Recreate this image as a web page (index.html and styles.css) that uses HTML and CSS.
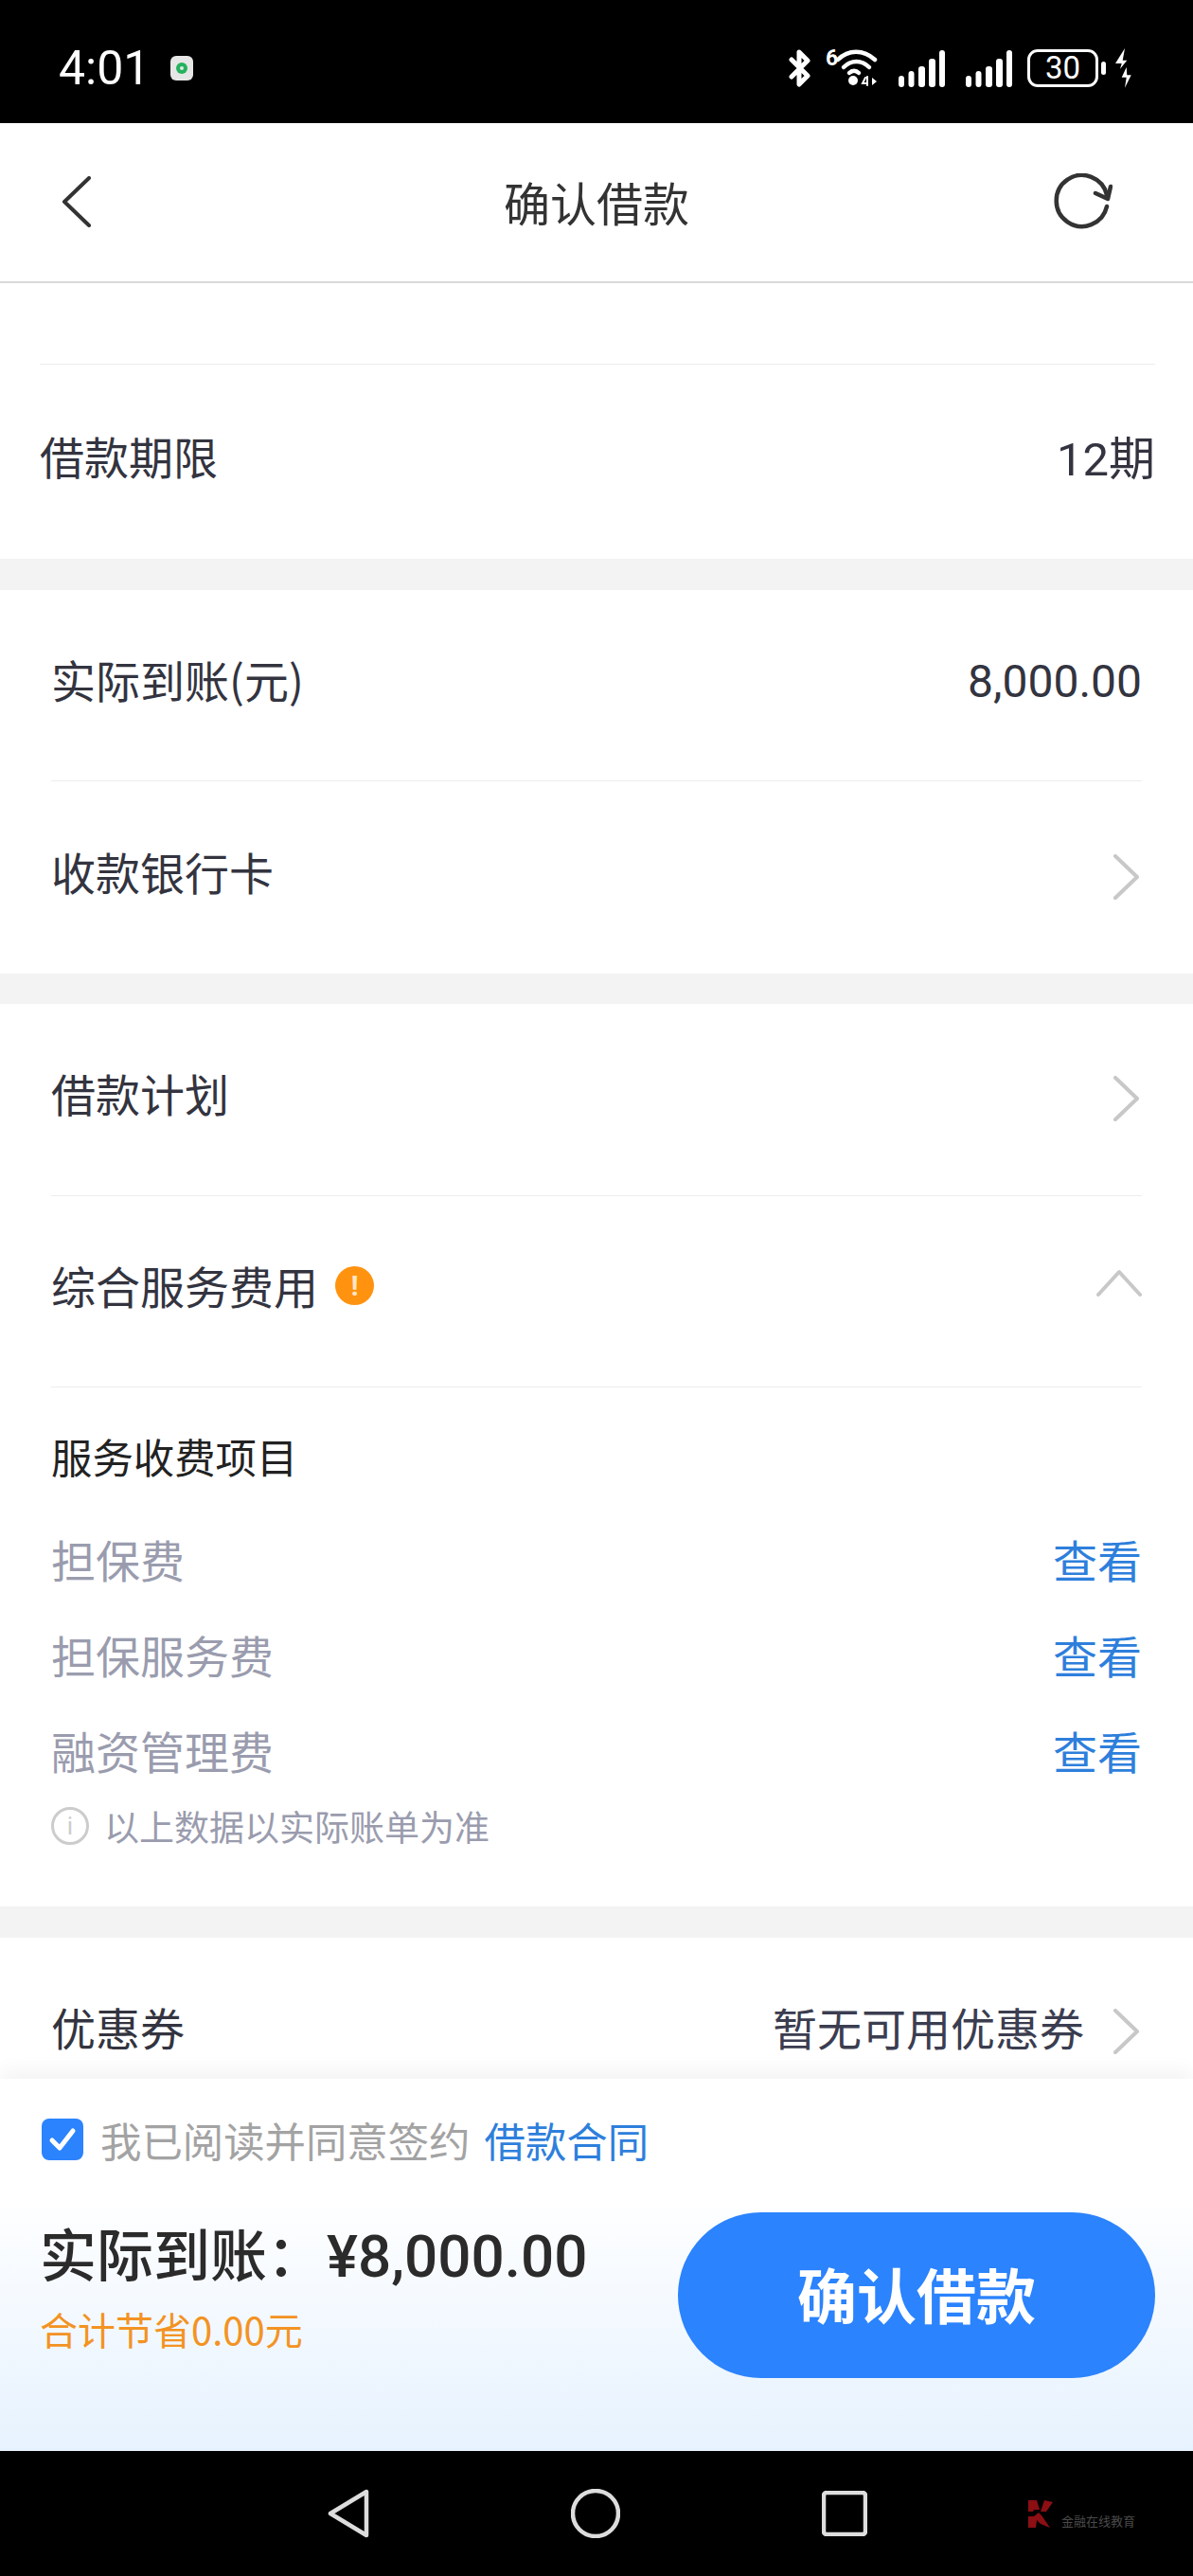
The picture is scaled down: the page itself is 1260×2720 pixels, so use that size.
FILE: index.html
```html
<!DOCTYPE html>
<html lang="zh-CN">
<head>
    <meta charset="UTF-8">
    <title>确认借款</title>
    <link rel="stylesheet" href="styles.css">
</head>
<body>
<div id="page">
    <div id="status">
        <span class="time">4:01</span>
        <span class="notice">
            <svg width="24" height="26" viewBox="0 0 24 26"><rect width="24" height="26" rx="6" fill="#e6e6e6"/><circle cx="12" cy="13" r="6" fill="#25b25f"/><circle cx="12" cy="13" r="2" fill="#e6e6e6"/></svg>
        </span>
        <div class="status-icons">
            <svg class="bt" width="24" height="40" viewBox="0 0 24 40" fill="none" stroke="#fff" stroke-width="5" stroke-linecap="round" stroke-linejoin="round"><path d="M3 11 L20 28 L11 37 V3 L20 12 L3 29"/></svg>
            <span class="wifi-six">6</span>
            <svg class="wifi" width="44" height="40" viewBox="0 0 44 40" fill="none" stroke="#fff" stroke-width="4.5" stroke-linecap="round"><path d="M2 11 C13 0 29 0 41 11"/><path d="M8 19 C16 11 27 11 35 19"/><circle cx="18" cy="33" r="5" fill="#fff" stroke="none"/><path d="M14 25 C17 22 21 22 24 25"/><path d="M31 30 L28 36 H33 M33 29 V38" stroke-width="2"/><path d="M38 30 V38 L43 34 Z" fill="#fff" stroke="none"/></svg>
            <svg class="signal" width="49" height="39" viewBox="0 0 49 39" fill="#fff"><rect x="0" y="27" width="6" height="12" rx="3"/><rect x="10.5" y="22" width="6" height="17" rx="3"/><rect x="21" y="17" width="7" height="22" rx="3"/><rect x="32" y="9" width="7" height="30" rx="3"/><rect x="43" y="0" width="6" height="39" rx="3"/></svg>
            <svg class="signal" width="49" height="39" viewBox="0 0 49 39" fill="#fff"><rect x="0" y="27" width="6" height="12" rx="3"/><rect x="10.5" y="22" width="6" height="17" rx="3"/><rect x="21" y="17" width="7" height="22" rx="3"/><rect x="32" y="9" width="7" height="30" rx="3"/><rect x="43" y="0" width="6" height="39" rx="3"/></svg>
            <span class="battery">30</span>
            <span class="battery-tip"></span>
            <svg class="bolt" width="18" height="42" viewBox="0 0 18 42" fill="#fff"><path d="M11 0 L1 16 H7.7 L6 21.7 L13.3 12.7 H8.7 Z"/><path d="M12.7 20 L7.7 30.7 H12.7 L11 41.7 L17.7 28.3 H13.3 Z"/></svg>
        </div>
    </div>

    <div id="nav">
        <svg width="31" height="54" viewBox="0 0 31 54" fill="none" stroke="#333" stroke-width="4" stroke-linecap="round" stroke-linejoin="round"><path d="M29 2 L3 27 L29 52"/></svg>
        <h1>确认借款</h1>
        <svg class="refresh" width="62" height="60" viewBox="0 0 62 60" fill="none" stroke="#333" stroke-width="4.5" stroke-linecap="round" stroke-linejoin="round"><path d="M56 35 A27 27 0 1 1 56 23"/><path d="M44 21 L57 27 L60 14"/></svg>
    </div>

    <div id="content">
        <div class="term">
            <div class="term-row">
                <span>借款期限</span>
                <span>12期</span>
            </div>
        </div>
        <div class="band"></div>

        <div class="group">
            <div class="row">
                <span>实际到账(元)</span>
                <span class="amount">8,000.00</span>
            </div>
            <div class="row last">
                <span>收款银行卡</span>
                <svg class="arrow" width="29" height="48" viewBox="0 0 29 48" fill="none" stroke="#c8c8c8" stroke-width="4" stroke-linecap="round" stroke-linejoin="round"><path d="M3 2 L26 24 L3 46"/></svg>
            </div>
        </div>
        <div class="band"></div>

        <div class="group">
            <div class="row">
                <span>借款计划</span>
                <svg class="arrow" width="29" height="48" viewBox="0 0 29 48" fill="none" stroke="#c8c8c8" stroke-width="4" stroke-linecap="round" stroke-linejoin="round"><path d="M3 2 L26 24 L3 46"/></svg>
            </div>
            <div class="row">
                <span class="with-tip">综合服务费用<i class="warn">!</i></span>
                <svg class="arrow-up" width="48" height="30" viewBox="0 0 48 30" fill="none" stroke="#c8c8c8" stroke-width="4" stroke-linecap="round" stroke-linejoin="round"><path d="M2 27 L24 3 L46 27"/></svg>
            </div>
            <div class="fees">
                <h2>服务收费项目</h2>
                <div class="fee"><span>担保费</span><a>查看</a></div>
                <div class="fee"><span>担保服务费</span><a>查看</a></div>
                <div class="fee"><span>融资管理费</span><a>查看</a></div>
                <p class="note"><i class="info">i</i>以上数据以实际账单为准</p>
            </div>
        </div>
        <div class="band"></div>

        <div class="group">
            <div class="row">
                <span>优惠券</span>
                <span class="coupon">暂无可用优惠券
                    <svg class="arrow" width="29" height="48" viewBox="0 0 29 48" fill="none" stroke="#c8c8c8" stroke-width="4" stroke-linecap="round" stroke-linejoin="round"><path d="M3 2 L26 24 L3 46"/></svg>
                </span>
            </div>
        </div>
    </div>

    <div id="footer">
        <div class="agree">
            <svg width="44" height="44" viewBox="0 0 44 44"><rect width="44" height="44" rx="8" fill="#2b83fd"/><path d="M11 23 L19 31 L33 13" fill="none" stroke="#fff" stroke-width="5" stroke-linecap="round" stroke-linejoin="round"/></svg>
            <span>我已阅读并同意签约</span>
            <a>借款合同</a>
        </div>
        <div class="pay">
            <div class="sum">
                <div class="sum-main">实际到账：<b>¥8,000.00</b></div>
                <div class="sum-save">合计节省0.00元</div>
            </div>
            <div class="confirm">确认借款</div>
        </div>
    </div>

    <div id="softkeys">
        <svg width="44" height="52" viewBox="0 0 44 52" fill="none" stroke="#ddd" stroke-width="4.5" stroke-linejoin="round"><path d="M41 3 V49 L3 26 Z"/></svg>
        <svg width="52" height="52" viewBox="0 0 52 52" fill="none" stroke="#ddd" stroke-width="4.5"><circle cx="26" cy="26" r="24"/></svg>
        <svg width="48" height="48" viewBox="0 0 48 48" fill="none" stroke="#ddd" stroke-width="4.5"><rect x="2" y="2" width="44" height="44" rx="3"/></svg>
        <div class="mark">
            <svg width="28" height="30" viewBox="0 0 28 30" fill="#8c0f14"><path d="M1 1 H10 L13 11 H7 L6 13 H1 Z M18 1 L27 3 L20 13 H14 Z M1 18 H7 L12 14 L15 17 L24 30 L14 26 L10 22 L9 30 H1 Z"/></svg>
            <span>金融在线教育</span>
        </div>
    </div>
</div>
</body>
</html>
```

FILE: styles.css
```css
*{
    margin: 0;
    padding: 0;
    box-sizing: border-box;
}
body{
    background: #fff;
    font-family: "Noto Sans CJK SC", "Noto Sans", sans-serif;
}
i{
    font-style: normal;
}
#page{
    width: 1260px;
    height: 2720px;
    display: flex;
    flex-direction: column;
    overflow: hidden;
}

/* status bar */
#status{
    height: 130px;
    flex: none;
    background: #000;
    display: flex;
    align-items: center;
    padding: 14px 65px 0 62px;
    color: #fff;
}
.time{
    font-family: Roboto, sans-serif;
    font-size: 50px;
    font-weight: 400;
}
.notice{
    display: flex;
    margin-left: 22px;
}
.status-icons{
    margin-left: auto;
    display: flex;
    align-items: center;
}
.wifi-six{
    font-family: Roboto, sans-serif;
    font-size: 23px;
    font-weight: 700;
    line-height: 22px;
    align-self: flex-start;
    margin-left: 15px;
    width: 11px;
}
.signal{
    margin-left: 22px;
}
.battery{
    width: 75px;
    height: 40px;
    margin-left: 16px;
    border: 3px solid #fff;
    border-radius: 11px;
    font-family: Roboto, sans-serif;
    font-size: 33px;
    font-weight: 400;
    line-height: 34px;
    text-align: center;
}
.battery-tip{
    width: 5px;
    height: 14px;
    margin-left: 3px;
    background: #fff;
    border-radius: 3px;
}
.bolt{
    margin-left: 9px;
}

/* title bar */
#nav{
    height: 169px;
    flex: none;
    display: grid;
    grid-template-columns: 1fr auto 1fr;
    align-items: center;
    padding: 0 65px 2px;
    border-bottom: 2px solid #d9d9d9;
    background: #fff;
}
#nav h1{
    font-size: 49px;
    font-weight: 400;
    color: #333;
    text-align: center;
}
.refresh{
    justify-self: end;
    margin-right: 20px;
}

/* scrolling content */
#content{
    flex: 1;
    min-height: 0;
    overflow: hidden;
    font-size: 47px;
    color: #33343f;
}
.term{
    padding: 85px 40px 0 42px;
}
.term-row{
    height: 206px;
    padding-bottom: 14px;
    border-top: 1px solid #ededed;
    display: flex;
    align-items: center;
    justify-content: space-between;
}
.term-row span:last-child{
    font-family: Roboto, "Noto Sans CJK SC", sans-serif;
    font-size: 49px;
}
.band{
    height: 32.5px;
    background: #f3f3f4;
}
.group{
    padding: 0 54px;
}
.row{
    height: 202.5px;
    padding-bottom: 14px;
    display: flex;
    align-items: center;
    justify-content: space-between;
    border-bottom: 1px solid #ededed;
}
.row.last{
    border-bottom: 0;
}
.group:last-child .row{
    border-bottom: 0;
}
.amount{
    font-family: Roboto, sans-serif;
    font-size: 48px;
    margin-top: 7px;
}
.with-tip{
    display: flex;
    align-items: center;
}
.warn{
    width: 41px;
    height: 41px;
    margin: 3px 0 0 18px;
    border-radius: 50%;
    background: #ff9310;
    color: #ffe6c4;
    font-family: Roboto, sans-serif;
    font-size: 30px;
    font-weight: 700;
    line-height: 41px;
    text-align: center;
}
.arrow{
    flex: none;
    margin: 13px 2px 0 0;
}
.arrow-up{
    flex: none;
    margin-top: -2px;
}
.coupon{
    display: flex;
    align-items: center;
    gap: 30px;
    color: #3b3d50;
}
.coupon .arrow{
    margin-right: 2px;
    margin-top: 10px;
}

/* fee details */
.fees{
    padding: 42px 0 55px;
}
.fees h2{
    font-size: 43.4px;
    font-weight: 400;
    line-height: 60px;
    color: #222;
    margin-bottom: 28px;
}
.fee{
    height: 101px;
    display: flex;
    align-items: center;
    justify-content: space-between;
    color: #9a9cae;
    font-size: 47px;
}
.fee a{
    color: #2e7fdc;
}
.note{
    display: flex;
    align-items: center;
    height: 60px;
    font-size: 37px;
    color: #9a9cae;
}
.info{
    width: 40px;
    height: 40px;
    margin-right: 16px;
    border: 3px solid #ccc;
    border-radius: 50%;
    color: #ccc;
    font-family: Roboto, sans-serif;
    font-size: 26px;
    line-height: 34px;
    text-align: center;
}

/* footer */
#footer{
    height: 393px;
    flex: none;
    padding: 33px 40px 0 44px;
    background: linear-gradient(#fff 30%, #e6f2fe 100%);
    box-shadow: 0 -8px 20px rgba(0, 0, 0, .05);
    position: relative;
}
.agree{
    display: flex;
    align-items: center;
    font-size: 43.4px;
    color: #a3a3a3;
}
.agree svg{
    margin-right: 18px;
}
.agree a{
    margin-left: 15px;
    color: #2e7fdc;
}
.pay{
    display: flex;
    align-items: center;
    justify-content: space-between;
    margin-top: 46px;
}
.sum{
    margin-left: -2px;
}
.sum-main{
    font-size: 60px;
    font-weight: 500;
    line-height: 80px;
    color: #2b2b2b;
    margin-top: -22px;
}
.sum-main b{
    font-family: Roboto, sans-serif;
    font-size: 62px;
    font-weight: 500;
    margin-left: 3px;
}
.sum-save{
    font-size: 40px;
    line-height: 56px;
    margin-top: 8px;
    color: #f39323;
}
.confirm{
    width: 504px;
    height: 175px;
    border-radius: 88px;
    background: #2b83fd;
    color: #fff;
    font-size: 63px;
    font-weight: 700;
    line-height: 169px;
    text-align: center;
}

/* android keys */
#softkeys{
    height: 132px;
    flex: none;
    background: #000;
    display: flex;
    align-items: center;
    gap: 213px;
    padding: 0 0 0 346px;
}
.mark{
    display: flex;
    align-items: flex-end;
    margin-left: -44px;
    gap: 8px;
    color: #4a4a4a;
    font-size: 13px;
    line-height: 14px;
}
```
